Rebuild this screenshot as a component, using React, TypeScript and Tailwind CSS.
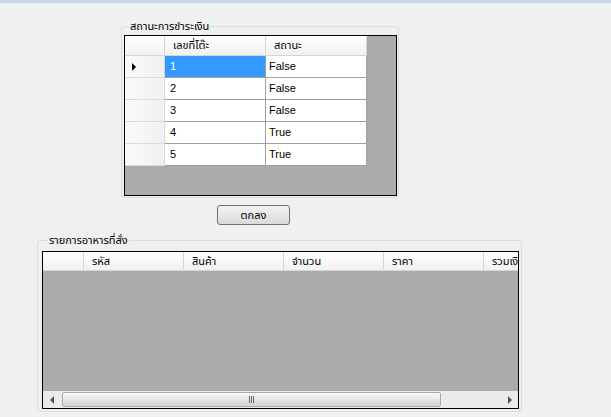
import React from "react";

const rows: [string, string][] = [
  ["1", "False"],
  ["2", "False"],
  ["3", "False"],
  ["4", "True"],
  ["5", "True"],
];

const cols2 = ["รหัส", "สินค้า", "จำนวน", "ราคา", "รวมเงิน"];

export default function App() {
  return (
    <div className="w-[611px] h-[417px] overflow-hidden bg-[#f0f0f0] text-[11px] leading-[13px] text-black [font-family:'Liberation_Sans','Noto_Sans_Thai','Noto_Sans',sans-serif]">
      <div className="h-[3px] bg-[#c9d5e3]" />

      {/* Group 1 */}
      <div className="relative ml-[121px] mt-[23px] w-[278px] h-[172px] rounded-[3px] border border-[#d5dfe5] pl-[2px] pt-[8px]">
        <span className="absolute left-[7px] top-[-8px] bg-[#f0f0f0] px-[1px] leading-[14px]">
          สถานะการชำระเงิน
        </span>
        <div className="flex h-[161px] w-[273px] flex-col border border-black bg-[#ababab]">
          <div className="flex h-[20px] shrink-0">
            <div className="w-[40px] shrink-0 border-b border-r border-[#d5d5d5] bg-gradient-to-b from-white to-[#f1f1f1]" />
            <div className="flex w-[101px] shrink-0 items-center border-b border-r border-[#d5d5d5] bg-gradient-to-b from-white to-[#f1f1f1] pl-[8px]">
              เลขที่โต๊ะ
            </div>
            <div className="flex w-[101px] shrink-0 items-center border-b border-r border-[#d5d5d5] bg-gradient-to-b from-white to-[#f1f1f1] pl-[8px]">
              สถานะ
            </div>
          </div>
          {rows.map(([n, s], i) => (
            <div key={n} className="flex h-[22px] shrink-0">
              <div className="flex w-[40px] shrink-0 items-center border-b border-r border-[#dadada] bg-gradient-to-r from-[#fbfbfb] to-[#f0f0f0] pl-[7px]">
                {i === 0 && (
                  <div className="h-0 w-0 border-y-[4px] border-l-[4px] border-y-transparent border-l-black" />
                )}
              </div>
              <div
                className={
                  i === 0
                    ? "flex w-[101px] shrink-0 items-center border-b border-r border-[#a0a0a0] bg-[#3399ff] pl-[5px] text-white"
                    : "flex w-[101px] shrink-0 items-center border-b border-r border-[#a0a0a0] bg-white pl-[5px]"
                }
              >
                {n}
              </div>
              <div className="flex w-[101px] shrink-0 items-center border-b border-r border-[#a0a0a0] bg-white pl-[3px]">
                {s}
              </div>
            </div>
          ))}
        </div>
      </div>

      <button className="ml-[217px] mt-[7px] flex h-[20px] w-[73px] items-center justify-center rounded-[3px] border border-[#707070] bg-gradient-to-b from-[#f3f3f3] to-[#dadada] text-[11px] leading-[13px]">
        ตกลง
      </button>

      {/* Group 2 */}
      <div className="relative ml-[37px] mt-[15px] w-[485px] h-[172px] rounded-[3px] border border-[#d5dfe5] pl-[4px] pt-[10px]">
        <span className="absolute left-[10px] top-[-8px] bg-[#f0f0f0] px-[1px] leading-[14px]">
          รายการอาหารที่สั่ง
        </span>
        <div className="flex h-[158px] w-[477px] flex-col overflow-hidden border border-black bg-[#ababab]">
          <div className="flex h-[19px] shrink-0">
            <div className="w-[41px] shrink-0 border-b border-r border-[#d5d5d5] bg-gradient-to-b from-white to-[#f1f1f1]" />
            {cols2.map((c) => (
              <div
                key={c}
                className="flex w-[100px] shrink-0 items-center overflow-hidden whitespace-nowrap border-b border-r border-[#d5d5d5] bg-gradient-to-b from-white to-[#f1f1f1] pl-[8px]"
              >
                {c}
              </div>
            ))}
          </div>
          <div className="flex-1" />
          <div className="flex h-[17px] shrink-0 items-center bg-[#ebebeb]">
            <div className="flex h-full w-[17px] shrink-0 items-center justify-center">
              <div className="h-0 w-0 border-y-[4px] border-r-[4px] border-y-transparent border-r-[#555]" />
            </div>
            <div className="ml-[2px] flex h-[15px] w-[379px] shrink-0 items-center justify-center rounded-[2px] border border-[#a9a9a9] bg-gradient-to-b from-[#f7f7f7] to-[#d6d6d6]">
              <div className="flex gap-[1px]">
                <div className="h-[7px] w-[1px] bg-[#666]" />
                <div className="h-[7px] w-[1px] bg-[#666]" />
                <div className="h-[7px] w-[1px] bg-[#666]" />
              </div>
            </div>
            <div className="flex-1" />
            <div className="flex h-full w-[17px] shrink-0 items-center justify-center">
              <div className="h-0 w-0 border-y-[4px] border-l-[4px] border-y-transparent border-l-[#555]" />
            </div>
          </div>
        </div>
      </div>
    </div>
  );
}
